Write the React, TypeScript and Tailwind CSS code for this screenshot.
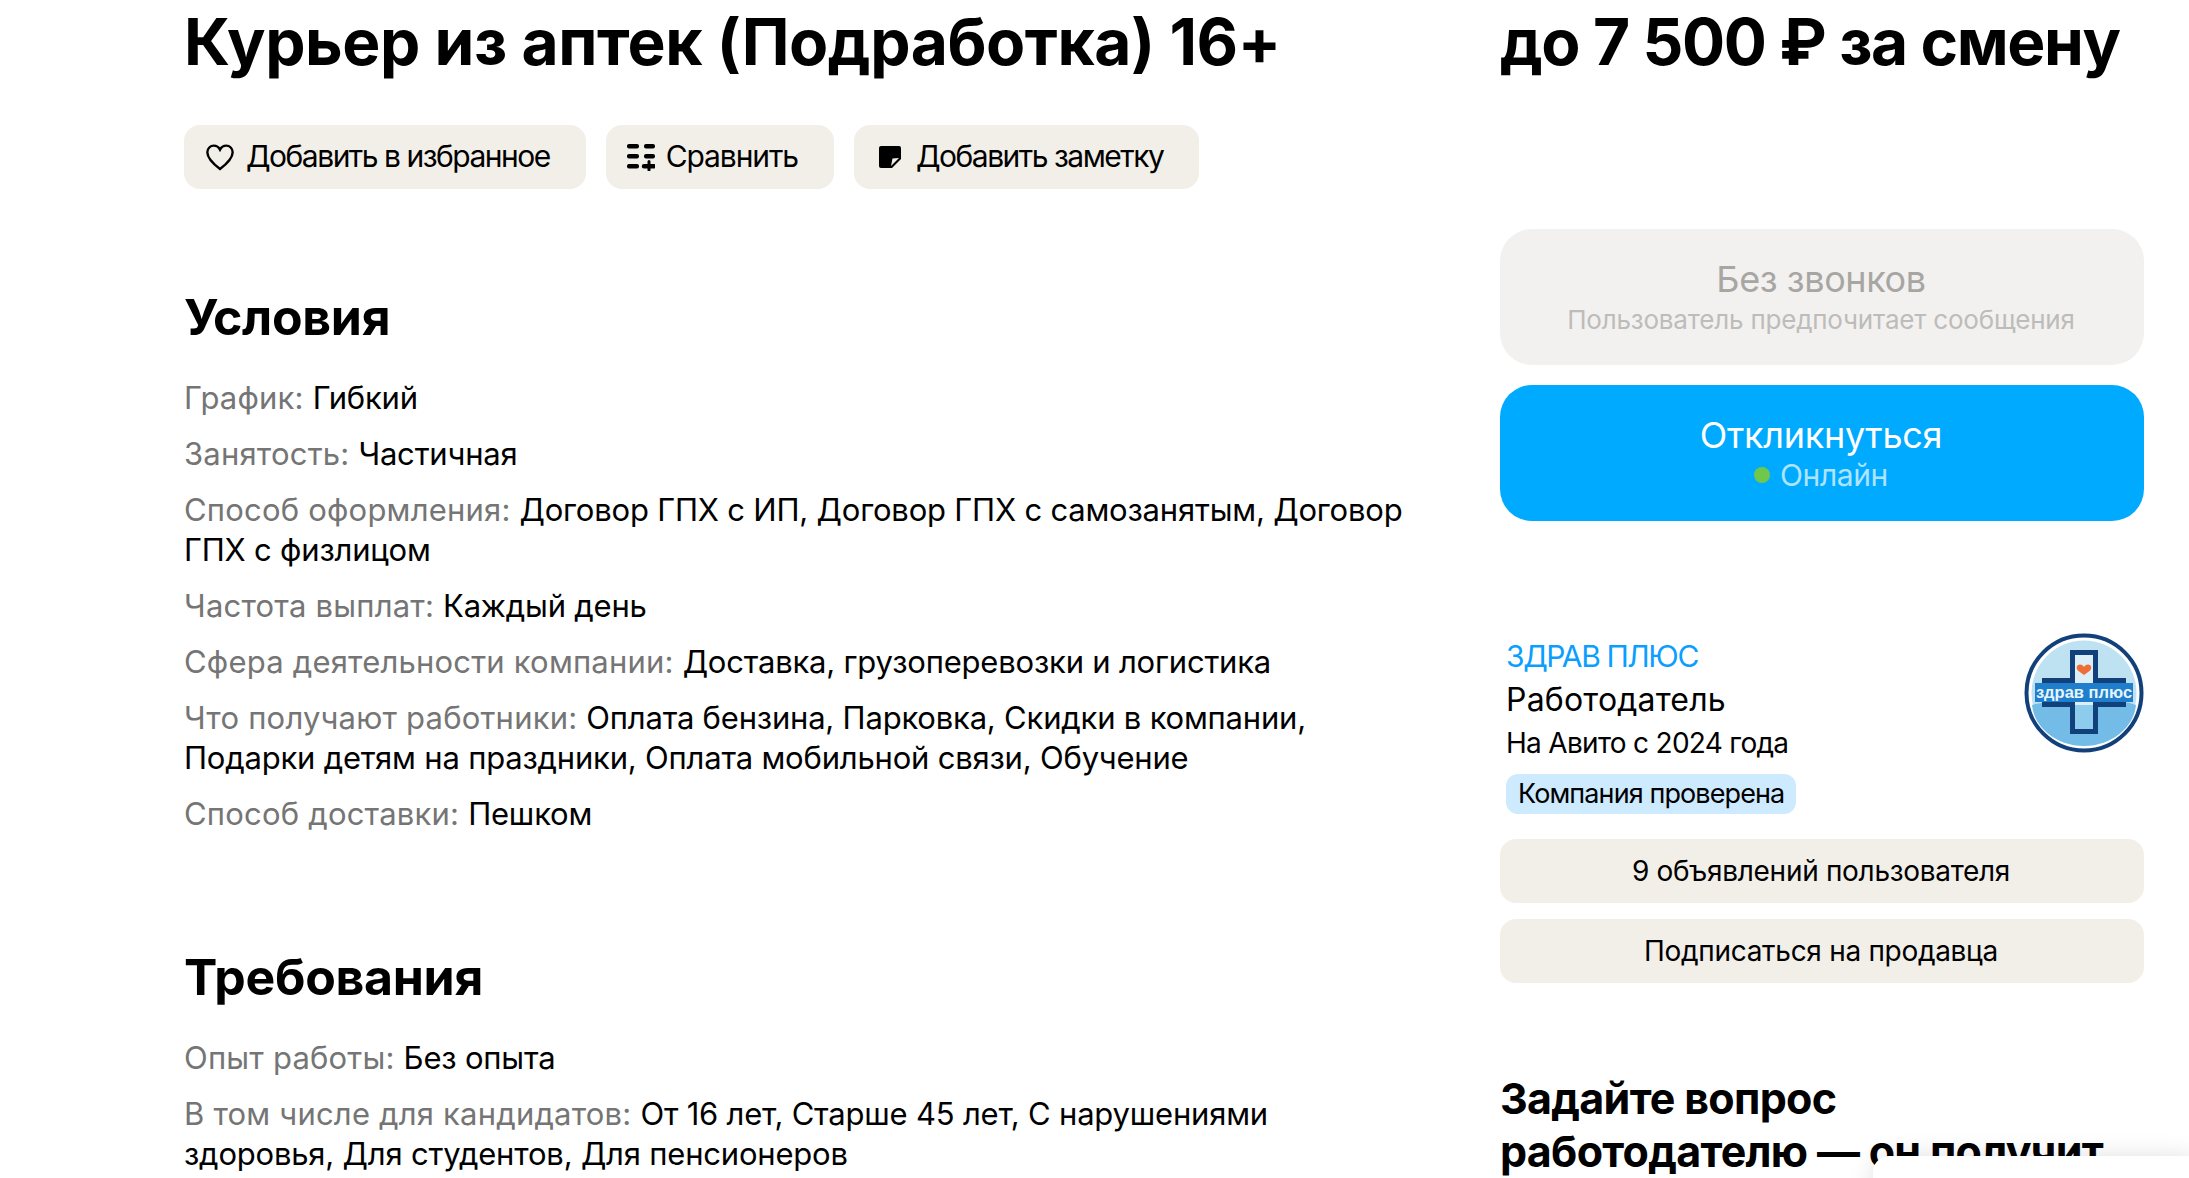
const font = "font-['Inter','Noto_Sans',sans-serif]";

function Row({ label, value }: { label: string; value: string }) {
  return (
    <p className="text-[31px] leading-[40px] tracking-[-0.2px]">
      <span className="text-[#757575] tracking-[0.2px]">{label}: </span>
      {value}
    </p>
  );
}

function Logo() {
  return (
    <svg viewBox="0 0 120 120" className="w-[120px] h-[120px] shrink-0">
      <circle cx="60" cy="60" r="57.500" fill="#fff" stroke="#12407a" strokeWidth="4" />
      <circle cx="60" cy="60" r="52.500" fill="#bfe2f2" />
      <path d="M8 72c20-6 30 4 52 0s36-6 52 0c-2 22-24 41-52 41S10 94 8 72z" fill="#74bce8" />
      <path d="M48.500 19.500h23v28h28v24h-28v27h-23v-27h-28v-24h28z" fill="#dceef7" stroke="#12407a" strokeWidth="5" />
      <path d="M51 72h18v24H51z" fill="#8dccec" />
      <path d="M60 42l-5.500-4c-3-2.500-2-6.500 1.500-6.500 2 0 3 1 4 2.500 1-1.500 2-2.500 4-2.500 3.500 0 4.500 4 1.500 6.500z" fill="#ee6f35" />
      <rect x="11" y="50" width="98" height="19" fill="#1f7fcd" />
      <text x="60" y="65" textAnchor="middle" fontFamily="'Liberation Sans',sans-serif" fontWeight="700" fontSize="16.500" fill="#e6f4fb">
        здрав плюс
      </text>
    </svg>
  );
}

export default function App() {
  return (
    <div className={`${font} relative h-screen overflow-hidden bg-white text-black`}>
      <div className="flex pl-[184px] pr-[45px] gap-[84px]">
        <main className="w-[1232px] shrink-0">
          <h1 className="text-[64px] leading-[84px] font-bold tracking-[-0.45px] whitespace-nowrap">Курьер из аптек (Подработка) 16+</h1>
          <div className="flex gap-5 mt-[41px]">
            <button className="flex items-center gap-[10px] h-16 pl-[20px] pr-9 rounded-2xl bg-[#f2efe9] text-[30px] tracking-[-1.5px]">
              <svg viewBox="0 0 24 24" className="w-8 h-8" fill="none" stroke="black" strokeWidth="1.8">
                <path d="M12 21C8 18 2.500 13.500 2.500 8.500 2.500 5.500 4.800 3.500 7.300 3.500c2 0 3.700 1 4.700 3 1-2 2.700-3 4.700-3 2.500 0 4.800 2 4.800 5 0 5-5.500 9.500-9.500 12.500z" />
              </svg>
              <span className="pb-[2px]">Добавить в избранное</span>
            </button>
            <button className="flex items-center gap-[11px] h-16 pl-[21px] pr-9 rounded-2xl bg-[#f2efe9] text-[30px] tracking-[-1.1px]">
              <svg viewBox="0 0 28 28" className="w-7 h-7" fill="black">
                <rect x="0" y="1" width="12" height="4.500" rx="2" />
                <rect x="17" y="1" width="11" height="4.500" rx="2" />
                <rect x="0" y="11" width="12" height="4.500" rx="2" />
                <rect x="17" y="11" width="11" height="4.500" rx="2" />
                <rect x="0" y="21" width="12" height="4.500" rx="2" />
                <path d="M20.500 18.500a1.500 1.500 0 0 1 3 0V21H27a1.500 1.500 0 0 1 0 4.500h-3.500V27a1.500 1.500 0 0 1-3 0v-1.500H17a1.500 1.500 0 0 1 0-4.500h3.500z" />
              </svg>
              <span className="pb-[2px]">Сравнить</span>
            </button>
            <button className="flex items-center gap-[15px] h-16 pl-[25px] pr-9 rounded-2xl bg-[#f2efe9] text-[30px] tracking-[-1.5px]">
              <svg viewBox="0 0 22 22" className="w-[22px] h-[22px]" fill="black">
                <path d="M2 0h18a2 2 0 0 1 2 2v11l-9 9H2a2 2 0 0 1-2-2V2a2 2 0 0 1 2-2z" />
                <path d="M12 20l1.500-7.500 6.500-.5z" fill="#f2efe9" />
              </svg>
              <span className="pb-[2px]">Добавить заметку</span>
            </button>
          </div>

          <h2 className="text-[50px] leading-[56px] font-bold tracking-[-0.3px] mt-[100px]">Условия</h2>
          <div className="flex flex-col gap-4 mt-[33px]">
            <Row label="График" value="Гибкий" />
            <Row label="Занятость" value="Частичная" />
            <Row label="Способ оформления" value="Договор ГПХ с ИП, Договор ГПХ с самозанятым, Договор ГПХ с физлицом" />
            <Row label="Частота выплат" value="Каждый день" />
            <Row label="Сфера деятельности компании" value="Доставка, грузоперевозки и логистика" />
            <Row label="Что получают работники" value="Оплата бензина, Парковка, Скидки в компании, Подарки детям на праздники, Оплата мобильной связи, Обучение" />
            <Row label="Способ доставки" value="Пешком" />
          </div>

          <h2 className="text-[50px] leading-[56px] font-bold tracking-[-0.3px] mt-[115px]">Требования</h2>
          <div className="flex flex-col gap-4 mt-[33px]">
            <Row label="Опыт работы" value="Без опыта" />
            <Row label="В том числе для кандидатов" value="От 16 лет, Старше 45 лет, С нарушениями здоровья, Для студентов, Для пенсионеров" />
          </div>
        </main>

        <aside className="w-[644px] shrink-0">
          <div className="text-[64px] leading-[84px] font-bold tracking-[-1.4px] whitespace-nowrap">до 7 500 ₽ за смену</div>
          <div className="flex flex-col items-center justify-center h-[136px] mt-[145px] pr-[2px] rounded-[32px] bg-[#f2f1ef]">
            <div className="text-[36px] leading-[44px] text-[#a8a6a3] tracking-[-0.4px]">Без звонков</div>
            <div className="text-[26px] leading-[36px] mt-[1px] text-[#bdbcba] tracking-[-0.2px]">Пользователь предпочитает сообщения</div>
          </div>
          <div className="flex flex-col items-center justify-center h-[136px] mt-5 pr-[2px] rounded-[32px] bg-[#00aaff] text-white">
            <div className="text-[36px] leading-[44px] tracking-[-0.3px] -mt-[1px]">Откликнуться</div>
            <div className="flex items-center gap-[10px] text-[30px] leading-[36px] text-[#b0e3ff] tracking-[-0.4px]">
              <span className="w-4 h-4 rounded-full bg-[#6fc84b]" />
              Онлайн
            </div>
          </div>

          <div className="flex justify-between mt-[112px]">
            <div className="pl-[6px] pt-[3px]">
              <div className="text-[30px] leading-[40px] text-[#0a9eff] tracking-[-1.4px]">ЗДРАВ ПЛЮС</div>
              <div className="text-[32px] leading-[40px] mt-1 tracking-[0.2px]">Работодатель</div>
              <div className="text-[28px] leading-[36px] mt-[5px] tracking-[-0.7px]">На Авито с 2024 года</div>
              <div className="w-fit h-10 flex items-center px-3 mt-[13px] rounded-xl bg-[#cdeaff] text-[27px] tracking-[-0.9px]">Компания проверена</div>
            </div>
            <Logo />
          </div>

          <button className="block w-full h-16 mt-[25px] pr-[2px] rounded-2xl bg-[#f2efe9] text-[28px] tracking-[-0.3px]">9 объявлений пользователя</button>
          <button className="block w-full h-16 mt-4 pr-[2px] rounded-2xl bg-[#f2efe9] text-[28px] tracking-[-0.3px]">Подписаться на продавца</button>

          <h3 className="text-[43px] leading-[53px] font-bold tracking-[-0.7px] mt-[89px] w-[620px]">Задайте вопрос работодателю — он получит</h3>
        </aside>
      </div>

      <div className="absolute left-[1873px] top-[1156px] w-[320px] h-[60px] bg-white rounded-tl-2xl shadow-[0_0_24px_rgba(0,0,0,0.12)]" />
    </div>
  );
}
